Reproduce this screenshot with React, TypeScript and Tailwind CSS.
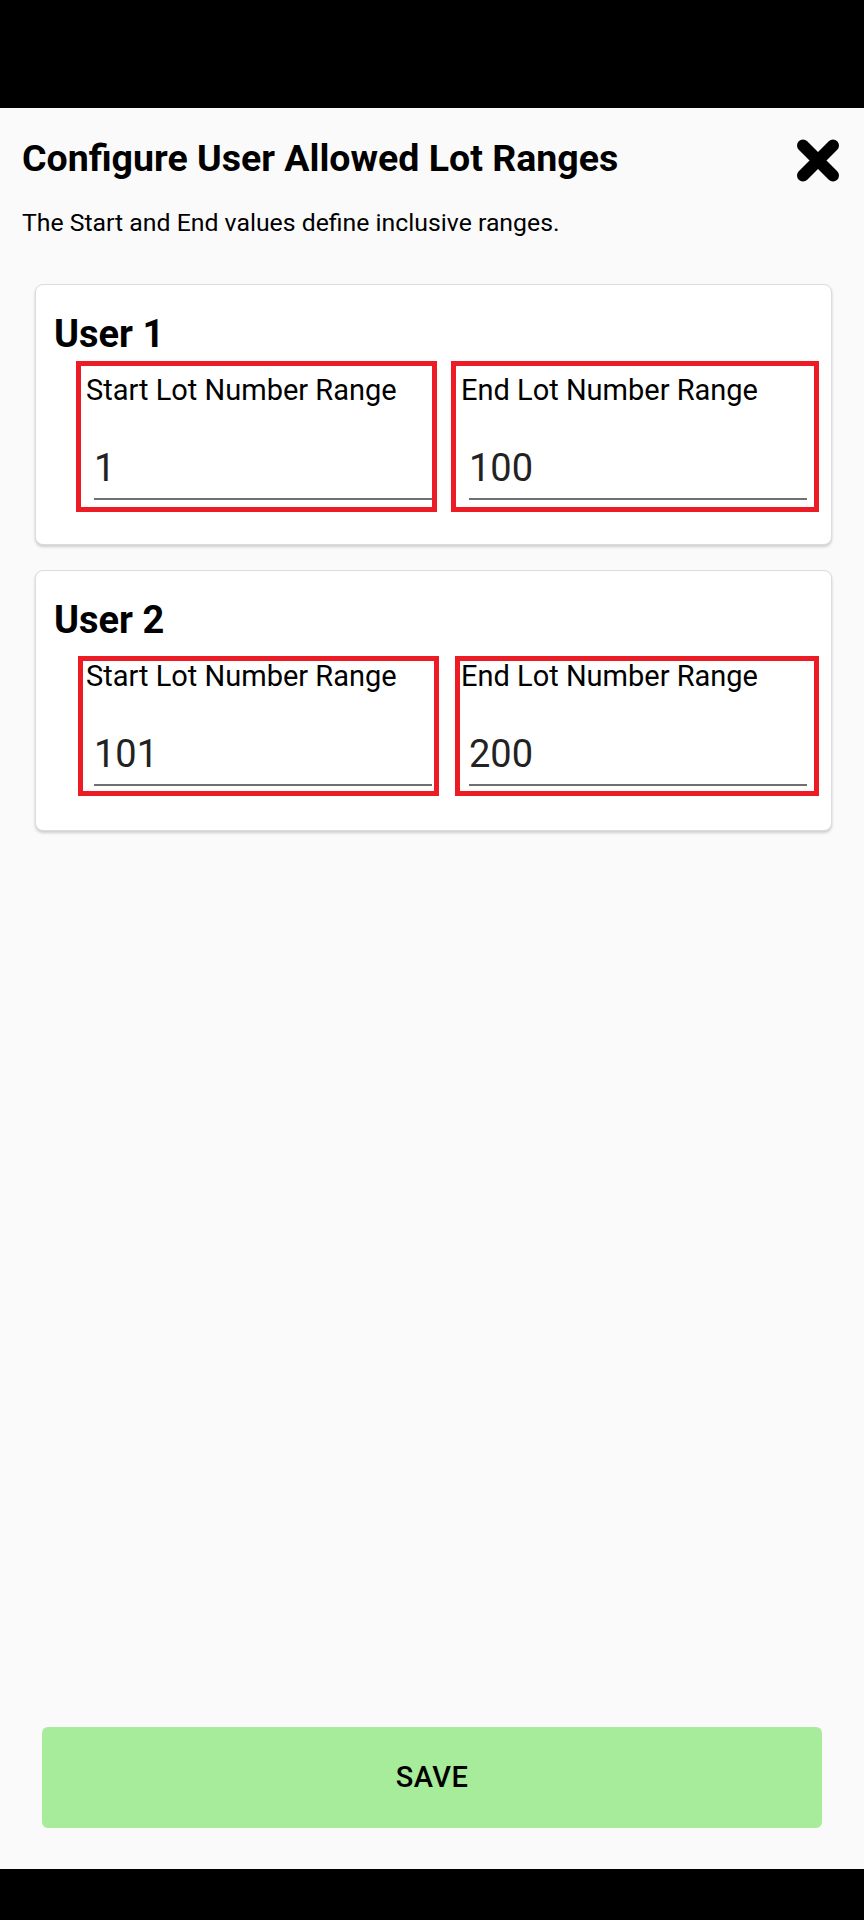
const users = [
  {
    name: 'User 1',
    fields: [
      { label: 'Start Lot Number Range', value: '1', box: '-left-[18px] -top-[12px] w-[361px] h-[151px]' },
      { label: 'End Lot Number Range', value: '100', box: '-left-[18px] -top-[12px] w-[368px] h-[151px]' },
    ],
  },
  {
    name: 'User 2',
    fields: [
      { label: 'Start Lot Number Range', value: '101', box: '-left-[16px] -top-[3px] w-[361px] h-[140px]' },
      { label: 'End Lot Number Range', value: '200', box: '-left-[14px] -top-[3px] w-[364px] h-[140px]' },
    ],
  },
];

function CloseIcon() {
  return (
    <svg width="42" height="43" viewBox="0 0 42 43" fill="none">
      <path d="M6 6.5 L36 36.5 M36 6.5 L6 36.5" stroke="#000" strokeWidth="12" strokeLinecap="round" />
    </svg>
  );
}

function RangeField({ label, value, box }: { label: string; value: string; box: string }) {
  return (
    <div className="relative">
      <div className="text-[29px] leading-[34px] text-black -ml-[8px] whitespace-nowrap">{label}</div>
      <div className="mt-[39px] text-[38px] leading-[45px] text-[#222]">{value}</div>
      <div className="mt-[7px] h-[2px] bg-[#707070]" />
      {/* red outline drawn over the input */}
      <div className={`absolute border-[5px] border-[#ed1c24] pointer-events-none ${box}`} />
    </div>
  );
}

export default function App() {
  return (
    <div className="w-[864px] h-[1920px] flex flex-col bg-[#fafafa] font-['Roboto',sans-serif]">
      <div className="h-[108px] bg-black shrink-0" />

      <div className="flex-1 flex flex-col">
        <div className="flex items-start justify-between pt-[28px] pl-[22px] pr-[25px]">
          <h1 className="text-[37.5px] leading-[44px] font-bold text-black whitespace-nowrap">
            Configure User Allowed Lot Ranges
          </h1>
          <div className="mt-[3px]">
            <CloseIcon />
          </div>
        </div>
        <p className="mt-[26px] pl-[22px] text-[24.8px] leading-[29px] text-black">
          The Start and End values define inclusive ranges.
        </p>

        <div className="mt-[47px] flex flex-col gap-[25px]">
          {users.map((user) => (
            <div
              key={user.name}
              className="ml-[35px] w-[797px] h-[261px] bg-white rounded-[8px] border border-[#dcdcdc] shadow-[0_2px_3px_rgba(0,0,0,0.18)]"
            >
              <h2 className="pt-[27px] pl-[18px] text-[38px] leading-[45px] font-bold text-black">{user.name}</h2>
              <div className="mt-[16px] pl-[58px] grid grid-cols-[338px_338px] gap-x-[37px]">
                {user.fields.map((f) => (
                  <RangeField key={f.label} label={f.label} value={f.value} box={f.box} />
                ))}
              </div>
            </div>
          ))}
        </div>

        <div className="mt-auto mb-[41px] px-[42px]">
          <button className="w-full h-[101px] rounded-[6px] bg-[#a7ec9a] text-[29px] font-medium text-black tracking-[0.5px]">
            SAVE
          </button>
        </div>
      </div>

      <div className="h-[51px] bg-black shrink-0" />
    </div>
  );
}
